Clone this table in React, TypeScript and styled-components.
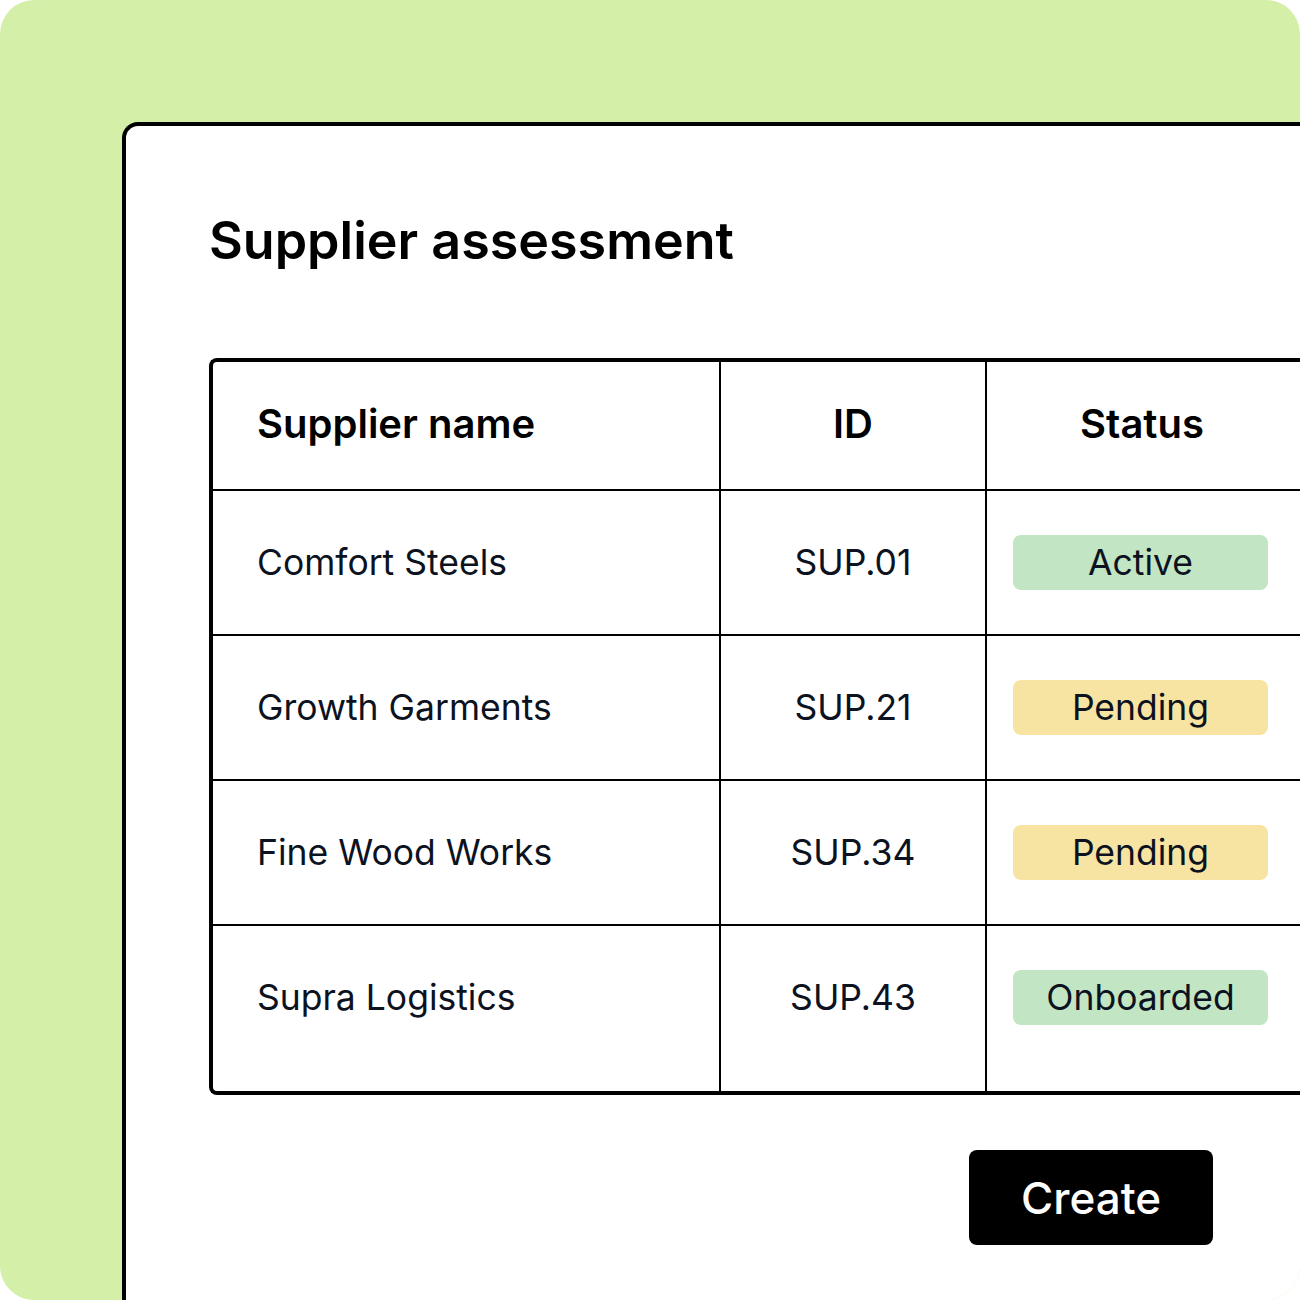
import styled, { createGlobalStyle } from "styled-components";

type Tone = "green" | "yellow";

interface ISupplier {
  name: string;
  id: string;
  status: string;
  tone: Tone;
}

const suppliers: ISupplier[] = [
  { name: "Comfort Steels", id: "SUP.01", status: "Active", tone: "green" },
  { name: "Growth Garments", id: "SUP.21", status: "Pending", tone: "yellow" },
  { name: "Fine Wood Works", id: "SUP.34", status: "Pending", tone: "yellow" },
  { name: "Supra Logistics", id: "SUP.43", status: "Onboarded", tone: "green" },
];

function App() {
  return (
    <>
      <GlobalStyle />
      <Panel>
        <Card>
          <Title>Supplier assessment</Title>
          <Table>
            <HeaderRow>
              <HeadCell $align="left">Supplier name</HeadCell>
              <HeadCell $align="center">ID</HeadCell>
              <HeadCell $align="center" $last>
                <StatusSlot>Status</StatusSlot>
              </HeadCell>
            </HeaderRow>
            {suppliers.map((s, i) => (
              <Row key={s.id} $last={i === suppliers.length - 1}>
                <Cell $align="left">{s.name}</Cell>
                <Cell $align="center">{s.id}</Cell>
                <Cell $align="left" $last>
                  <Badge $tone={s.tone}>{s.status}</Badge>
                </Cell>
              </Row>
            ))}
          </Table>
          <Footer>
            <CreateButton>Create</CreateButton>
          </Footer>
        </Card>
      </Panel>
    </>
  );
}

const GlobalStyle = createGlobalStyle`
  html, body {
    margin: 0;
    padding: 0;
    background: #ffffff;
  }
  body {
    font-family: Inter, "Noto Sans", "Liberation Sans", sans-serif;
  }
`;

const Panel = styled.div`
  width: 1300px;
  height: 1300px;
  box-sizing: border-box;
  background: #d4f0a8;
  border-radius: 34px;
  overflow: hidden;
  padding: 122px 0 0 122px;
`;

const Card = styled.div`
  width: 1300px;
  height: 1300px;
  box-sizing: border-box;
  background: #ffffff;
  border-top: 4px solid #000;
  border-left: 4px solid #000;
  border-top-left-radius: 16px;
  padding: 84px 0 0 83px;
`;

const Title = styled.h1`
  margin: 0;
  font-size: 52px;
  font-weight: 600;
  line-height: 62px;
  color: #000;
`;

const Table = styled.div`
  margin-top: 86px;
  width: 1250px;
  border: 4px solid #000;
  border-right: none;
  border-radius: 8px 0 0 8px;
`;

const columns = "508px 266px 1fr";

const HeaderRow = styled.div`
  display: grid;
  grid-template-columns: ${columns};
  height: 129px;
  box-sizing: border-box;
  border-bottom: 2px solid #000;
`;

const Row = styled.div<{ $last?: boolean }>`
  display: grid;
  grid-template-columns: ${columns};
  height: ${(p) => (p.$last ? "165px" : "145px")};
  box-sizing: border-box;
  border-bottom: ${(p) => (p.$last ? "none" : "2px solid #000")};
`;

const HeadCell = styled.div<{ $align: "left" | "center"; $last?: boolean }>`
  display: flex;
  align-items: center;
  justify-content: ${(p) => (p.$align === "left" ? "flex-start" : "center")};
  padding-left: ${(p) => (p.$align === "left" ? "44px" : "0")};
  padding-bottom: 5px;
  border-right: ${(p) => (p.$last ? "none" : "2px solid #000")};
  font-size: 40px;
  font-weight: 600;
  color: #000;
`;

const StatusSlot = styled.div`
  width: 310px;
  text-align: center;
  align-self: center;
  margin-right: auto;
`;

const Cell = styled.div<{ $align: "left" | "center"; $last?: boolean }>`
  display: flex;
  align-items: center;
  justify-content: ${(p) => (p.$align === "left" ? "flex-start" : "center")};
  padding-left: ${(p) => (p.$align === "left" ? (p.$last ? "26px" : "44px") : "0")};
  border-right: ${(p) => (p.$last ? "none" : "2px solid #000")};
  font-size: 35.5px;
  font-weight: 400;
  color: #0c1220;
  ${Row}:last-child & {
    padding-bottom: 22px;
  }
`;

const Badge = styled.div<{ $tone: Tone }>`
  width: 255px;
  height: 55px;
  border-radius: 8px;
  display: flex;
  align-items: center;
  justify-content: center;
  background: ${(p) => (p.$tone === "green" ? "#c2e5c3" : "#f7e4a2")};
  font-size: 35.5px;
  color: #0c1220;
`;

const Footer = styled.div`
  width: 1004px;
  display: flex;
  justify-content: flex-end;
  margin-top: 55px;
`;

const CreateButton = styled.button`
  width: 244px;
  height: 95px;
  border: none;
  border-radius: 8px;
  background: #000;
  color: #fff;
  font-family: Inter, "Noto Sans", "Liberation Sans", sans-serif;
  font-size: 44px;
  font-weight: 500;
  cursor: pointer;
`;

export default App;
